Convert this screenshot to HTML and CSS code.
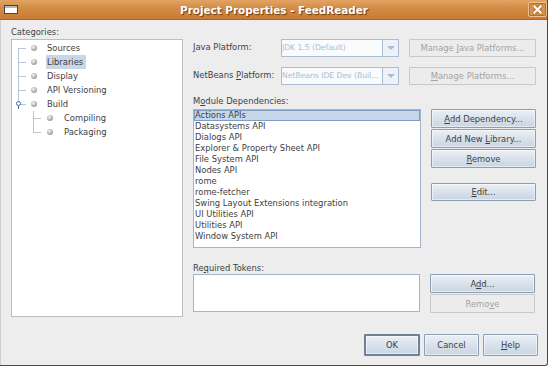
FILE: index.html
```html
<!DOCTYPE html>
<html lang="en">
<head>
  <meta charset="UTF-8">
  <title>Project Properties - FeedReader</title>
  <link rel="stylesheet" href="styles.css">
</head>
<body>

<div class="window">
  <!-- Title bar -->
  <div class="titlebar">
    <span class="win-icon"></span>
    <span class="title">Project Properties - FeedReader</span>
    <span class="close">
      <svg width="9" height="9" viewBox="0 0 9 9"><path d="M1.5 1.5 L7.5 7.5 M7.5 1.5 L1.5 7.5" stroke="#fff" stroke-width="2.2" stroke-linecap="square"/></svg>
    </span>
  </div>

  <div class="content">
    <div class="main">
      <!-- Categories -->
      <div class="left">
        <div class="label">Categories:</div>
        <div class="tree">
          <div class="node first"><span class="branch"></span><span class="bullet"></span><span class="text">Sources</span></div>
          <div class="node"><span class="branch"></span><span class="bullet"></span><span class="text selected">Libraries</span></div>
          <div class="node"><span class="branch"></span><span class="bullet"></span><span class="text">Display</span></div>
          <div class="node"><span class="branch"></span><span class="bullet"></span><span class="text">API Versioning</span></div>
          <div class="node last"><span class="branch"><span class="handle"></span></span><span class="bullet"></span><span class="text">Build</span></div>
          <div class="node child"><span class="branch"></span><span class="bullet"></span><span class="text">Compiling</span></div>
          <div class="node child last"><span class="branch"></span><span class="bullet"></span><span class="text">Packaging</span></div>
        </div>
      </div>

      <!-- Libraries panel -->
      <div class="right">
        <div class="platform-row">
          <span class="row-label"><u>J</u>ava Platform:</span>
          <div class="combo"><span class="combo-text">JDK 1.5 (Default)</span><span class="arrow"></span></div>
          <button class="btn wide" disabled>Manage <u>J</u>ava Platforms...</button>
        </div>
        <div class="platform-row">
          <span class="row-label">NetBeans <u>P</u>latform:</span>
          <div class="combo"><span class="combo-text">NetBeans IDE Dev (Buil...</span><span class="arrow"></span></div>
          <button class="btn wide" disabled><u>M</u>anage Platforms...</button>
        </div>

        <div class="label deps-label">M<u>o</u>dule Dependencies:</div>
        <div class="split">
          <div class="list">
            <div class="item selected">Actions APIs</div>
            <div class="item">Datasystems API</div>
            <div class="item">Dialogs API</div>
            <div class="item">Explorer &amp; Property Sheet API</div>
            <div class="item">File System API</div>
            <div class="item">Nodes API</div>
            <div class="item">rome</div>
            <div class="item">rome-fetcher</div>
            <div class="item">Swing Layout Extensions integration</div>
            <div class="item">UI Utilities API</div>
            <div class="item">Utilities API</div>
            <div class="item">Window System API</div>
          </div>
          <div class="side-buttons">
            <button class="btn"><u>A</u>dd Dependency...</button>
            <button class="btn">Add New <u>L</u>ibrary...</button>
            <button class="btn"><u>R</u>emove</button>
            <button class="btn spaced"><u>E</u>dit...</button>
          </div>
        </div>

        <div class="label tokens-label">Re<u>q</u>uired Tokens:</div>
        <div class="split">
          <div class="tokens"></div>
          <div class="side-buttons">
            <button class="btn">A<u>d</u>d...</button>
            <button class="btn" disabled>Remo<u>v</u>e</button>
          </div>
        </div>
      </div>
    </div>

    <div class="footer">
      <button class="btn big default">OK</button>
      <button class="btn big">Cancel</button>
      <button class="btn big"><u>H</u>elp</button>
    </div>
  </div>
</div>

</body>
</html>
```

FILE: styles.css
```css
/* Base */
body {
  margin: 0;
  background: #fff;
  font-family: 'DejaVu Sans', sans-serif;
  font-size: 8.4px;
  color: #3e3e3e;
}
u {
  text-decoration: underline;
  text-underline-offset: 1px;
}
.window {
  width: 547px;
  height: 365px;
  background: #ededed;
  border-right: 1px solid #4a4a4a;
  border-bottom: 1px solid #4a4a4a;
  border-bottom-right-radius: 3px;
  box-shadow: inset 1px 0 0 #cfcfcf;
  display: flex;
  flex-direction: column;
}

/* Title bar */
.titlebar {
  height: 19px;
  border-bottom: 1px solid #a9652a;
  background: linear-gradient(#e2a464, #d38b44 45%, #c97b36);
  display: flex;
  align-items: center;
}
.win-icon {
  width: 12px;
  height: 7px;
  margin-left: 4px;
  border: 1px solid #444;
  background: linear-gradient(#b9b9b9 2px, #fff 2px);
}
.title {
  flex: 1;
  text-align: center;
  font-weight: bold;
  font-size: 10.4px;
  color: #fff;
  text-shadow: 1px 1px 1px #6b3a10;
  padding-left: 2px;
}
.close {
  width: 17px;
  height: 13px;
  border: 1px solid #f0c28f;
  box-shadow: inset 0 0 0 1px #b36e30;
  background: #d99450;
  border-radius: 2px;
  display: flex;
  align-items: center;
  justify-content: center;
}
.close svg {
  filter: drop-shadow(0 0 1px #7a4215);
}

/* Content */
.content {
  flex: 1;
  padding: 6px 10px 0 11px;
  display: flex;
  flex-direction: column;
}
.main {
  display: flex;
  gap: 10px;
}
.label {
  height: 12px;
  line-height: 12px;
  margin-bottom: 1px;
}

/* Category tree */
.left {
  width: 172px;
}
.tree {
  height: 275px;
  background: #fff;
  border: 1px solid #bdbdbd;
  padding-top: 1px;
}
.node {
  display: flex;
  align-items: center;
  height: 14px;
}
.branch {
  position: relative;
  width: 8px;
  height: 14px;
  margin-left: 6px;
  background:
    linear-gradient(#b7c7d9, #b7c7d9) left top / 1px 100% no-repeat,
    linear-gradient(#b7c7d9, #b7c7d9) left 7px / 100% 1px no-repeat;
}
.node.first .branch {
  background:
    linear-gradient(#b7c7d9, #b7c7d9) left 7px / 1px 7px no-repeat,
    linear-gradient(#b7c7d9, #b7c7d9) left 7px / 100% 1px no-repeat;
}
.node.last .branch {
  background:
    linear-gradient(#b7c7d9, #b7c7d9) left top / 1px 8px no-repeat,
    linear-gradient(#b7c7d9, #b7c7d9) left 7px / 100% 1px no-repeat;
}
.node.child .branch {
  margin-left: 21px;
}
.handle {
  position: absolute;
  left: -2px;
  top: 4px;
  width: 3px;
  height: 3px;
  border: 1px solid #4266a8;
  border-radius: 50%;
  background: #fff;
}
.handle::after {
  content: '';
  position: absolute;
  left: 1px;
  top: 4px;
  width: 1px;
  height: 3px;
  background: #4266a8;
}
.bullet {
  width: 6px;
  height: 6px;
  margin-left: 5px;
  border-radius: 50%;
  background: radial-gradient(circle at 40% 35%, #f6f6f6, #a8a8a8 60%, #8a8a8a);
}
.node.child .bullet {
  margin-left: 6px;
}
.text {
  margin-left: 9px;
  padding: 0 1px;
  line-height: 14px;
}
.node.child .text {
  margin-left: 10px;
}
.text.selected {
  background: #c7d7ea;
  padding-right: 3px;
}

/* Right panel */
.right {
  width: 343px;
  padding-top: 13px;
}
.platform-row {
  display: flex;
  height: 18px;
  margin-bottom: 10px;
}
.row-label {
  width: 88px;
  line-height: 17px;
}
.combo {
  width: 116px;
  height: 16px;
  border: 1px solid #a9bdd4;
  background: #fafbfd;
  display: flex;
  margin-right: 10px;
}
.combo-text {
  flex: 1;
  color: #a9bdd4;
  font-size: 7.8px;
  letter-spacing: -0.1px;
  line-height: 16px;
  white-space: nowrap;
}
.arrow {
  width: 15px;
  border-left: 1px solid #a9bdd4;
  background: #eef2f7;
  display: flex;
  align-items: center;
  justify-content: center;
}
.arrow::after {
  content: '';
  border-left: 4px solid transparent;
  border-right: 4px solid transparent;
  border-top: 4px solid #a9bdd4;
}

/* Buttons */
.btn {
  font-family: inherit;
  font-size: 8.4px;
  color: #3e3e3e;
  height: 19px;
  padding: 0;
  border: 1px solid #8d9eb3;
  border-radius: 1px;
  background: linear-gradient(#eaf0f6, #d9e2ec 50%, #c9d5e2);
  box-shadow: inset 0 0 0 1px rgba(255,255,255,0.5);
  text-align: center;
}
.btn:disabled {
  color: #a3a3a3;
  border-color: #c9c9c9;
  background: #ececec;
  box-shadow: none;
}
.btn.wide {
  width: 127px;
  height: 18px;
}

.deps-label {
  margin-top: 4px;
  margin-bottom: 2px;
}
.split {
  display: flex;
  gap: 10px;
}
.list {
  width: 226px;
  height: 137px;
  background: #fff;
  border: 1px solid #a3b5ca;
}
.item {
  height: 11px;
  line-height: 11px;
  padding-left: 1px;
  white-space: nowrap;
}
.item.selected {
  background: #c7d7ea;
  border: 1px solid #7f9dc4;
  height: 9px;
  line-height: 9px;
  padding-left: 0;
}
.side-buttons {
  width: 105px;
  display: flex;
  flex-direction: column;
  gap: 1px;
}
.side-buttons .btn {
  width: 105px;
}
.btn.spaced {
  margin-top: 14px;
  height: 18px;
}

.tokens-label {
  margin-top: 14px;
  margin-bottom: 0;
}
.tokens {
  width: 225px;
  height: 36px;
  background: #fff;
  border: 1px solid #a3b5ca;
}

/* Dialog buttons */
.footer {
  display: flex;
  justify-content: flex-end;
  gap: 4px;
  margin-top: 17px;
  margin-right: -1px;
}
.btn.big {
  width: 55px;
  height: 22px;
}
.btn.default {
  width: 56px;
  border: 2px solid #6f8098;
}
```
